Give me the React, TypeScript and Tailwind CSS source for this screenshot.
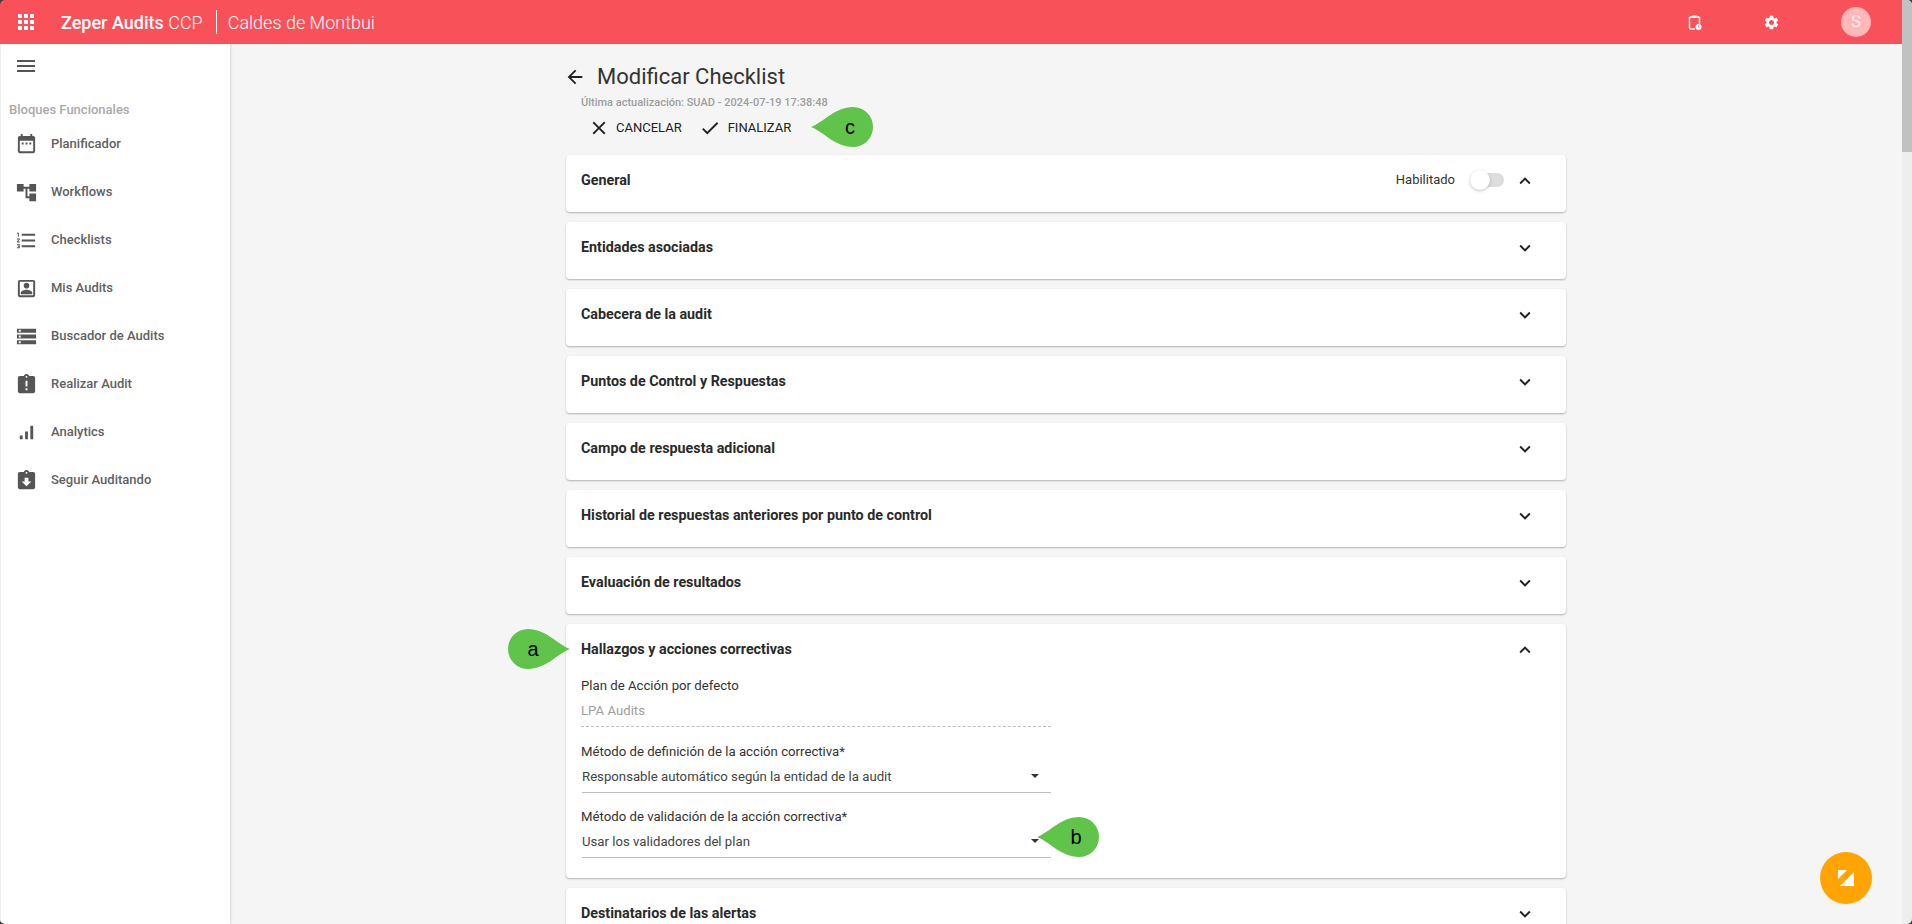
import type { ReactNode } from 'react'

const ROBOTO = 'font-[Roboto,sans-serif]'

function Icon({ d, className = '' }: { d: string; className?: string }) {
  return (
    <svg viewBox="0 0 24 24" fill="currentColor" className={className}>
      <path d={d} />
    </svg>
  )
}

const CHEVRON_DOWN = 'M7.41 8.59 12 13.17l4.59-4.58L18 10l-6 6-6-6z'
const CHEVRON_UP = 'M7.41 15.41 12 10.83l4.59 4.58L18 14l-6-6-6 6z'

const menuItems = [
  {
    label: 'Planificador',
    d: 'M19 3h-1V1h-2v2H8V1H6v2H5c-1.11 0-2 .9-2 2v14c0 1.1.89 2 2 2h14c1.1 0 2-.9 2-2V5c0-1.1-.9-2-2-2zm0 16H5V8h14v11zM7 10h2v2H7zm4 0h2v2h-2zm4 0h2v2h-2z',
  },
  { label: 'Workflows', d: 'M22 11V3h-7v3H9V3H2v8h7V8h2v10h4v3h7v-8h-7v3h-2V8h2v3z' },
  {
    label: 'Checklists',
    d: 'M2 17h2v.5H3v1h1v.5H2v1h3v-4H2v1zm1-9h1V4H2v1h1v3zm-1 3h1.8L2 13.1v.9h3v-1H3.2L5 10.9V10H2v1zm5-6v2h14V5H7zm0 14h14v-2H7v2zm0-6h14v-2H7v2z',
  },
  {
    label: 'Mis Audits',
    d: 'M19 5v14H5V5h14m0-2H5c-1.1 0-2 .9-2 2v14c0 1.1.9 2 2 2h14c1.1 0 2-.9 2-2V5c0-1.1-.9-2-2-2zM12 12c1.65 0 3-1.35 3-3s-1.35-3-3-3-3 1.35-3 3 1.35 3 3 3zm-6 6h12v-1.5c0-2-4-3.1-6-3.1s-6 1.1-6 3.1V18z',
  },
  {
    label: 'Buscador de Audits',
    d: 'M2 20h20v-4H2v4zm2-3h2v2H4v-2zM2 4v4h20V4H2zm4 3H4V5h2v2zm-4 7h20v-4H2v4zm2-3h2v2H4v-2z',
  },
  {
    label: 'Realizar Audit',
    d: 'M19 3h-4.18C14.4 1.84 13.3 1 12 1c-1.3 0-2.4.84-2.82 2H5c-1.1 0-2 .9-2 2v14c0 1.1.9 2 2 2h14c1.1 0 2-.9 2-2V5c0-1.1-.9-2-2-2zm-6 15h-2v-2h2v2zm0-4h-2V8h2v6zm-1-9c-.55 0-1-.45-1-1s.45-1 1-1 1 .45 1 1-.45 1-1 1z',
  },
  { label: 'Analytics', d: 'M5 15h3v4H5zM10.5 11h3v8h-3zM16 5h3v14h-3z' },
  {
    label: 'Seguir Auditando',
    d: 'M19 3h-4.18C14.4 1.84 13.3 1 12 1c-1.3 0-2.4.84-2.82 2H5c-1.1 0-2 .9-2 2v14c0 1.1.9 2 2 2h14c1.1 0 2-.9 2-2V5c0-1.1-.9-2-2-2zm-7 0c.55 0 1 .45 1 1s-.45 1-1 1-1-.45-1-1 .45-1 1-1zm0 15l-5-5h3V9h4v4h3l-5 5z',
  },
]

const collapsed = [
  'Entidades asociadas',
  'Cabecera de la audit',
  'Puntos de Control y Respuestas',
  'Campo de respuesta adicional',
  'Historial de respuestas anteriores por punto de control',
  'Evaluación de resultados',
]

// green marker, tip on the left unless flipped
function Callout({ letter, flip, className }: { letter: string; flip?: boolean; className: string }) {
  return (
    <div className={`absolute w-[62px] h-10 flex items-center justify-center ${className}`}>
      <svg viewBox="0 0 62 40" className={`absolute inset-0 w-[62px] h-10 ${flip ? '-scale-x-100' : ''}`}>
        <path d="M0 20C13 15 24 0 42 0a20 20 0 0 1 0 40C24 40 13 25 0 20z" fill="#60c44a" />
      </svg>
      <span
        className={`relative font-['Liberation_Sans',sans-serif] text-xl text-black ${flip ? 'pr-[12px]' : 'pl-[16px]'}`}
      >
        {letter}
      </span>
    </div>
  )
}

function Card({ title, right, open, children }: { title: string; right?: ReactNode; open?: boolean; children?: ReactNode }) {
  return (
    <div className="relative bg-white rounded-[4px] shadow-[0_1px_2px_rgba(0,0,0,0.28)] shrink-0">
      <div className="h-[57px] pl-[15px] pr-[30px] pt-[14px] flex items-start">
        <div className="text-[14.3px] font-bold leading-[22px] text-[#2a2a2a] flex-1">{title}</div>
        {right}
        <Icon d={open ? CHEVRON_UP : CHEVRON_DOWN} className="w-[22px] h-[22px] mt-[1px] text-[#212121]" />
      </div>
      {children}
    </div>
  )
}

function SelectField({ label, value, children }: { label: string; value: string; children?: ReactNode }) {
  return (
    <div className="relative w-[470px] ml-[15px] h-[65px]">
      <div className="text-[13.2px] leading-4 text-[#333]">{label}</div>
      <div className="mt-[9px] ml-[1px] h-[24px] border-b border-[#bdbdbd] flex text-[13.2px] leading-4 text-[#444]">
        <span className="flex-1">{value}</span>
        <span className="mt-[5px] mr-[12px] w-0 h-0 border-x-4 border-x-transparent border-t-4 border-t-[#333]" />
      </div>
      {children}
    </div>
  )
}

export default function App() {
  return (
    <div className="h-screen w-full bg-[#3a3a3a] overflow-hidden">
      <div className={`relative h-full flex rounded-[5px] overflow-hidden ${ROBOTO}`}>
        <div className="flex-1 min-w-0 flex flex-col">
          <header className="h-11 shrink-0 bg-[#f8515a] text-white flex items-center relative z-10">
            <Icon
              d="M4 8h4V4H4v4zm6 12h4v-4h-4v4zm-6 0h4v-4H4v4zm0-6h4v-4H4v4zm6 0h4v-4h-4v4zm6-10v4h4V4h-4zm-6 4h4V4h-4v4zm6 6h4v-4h-4v4zm0 6h4v-4h-4v4z"
              className="w-6 h-6 ml-[14px]"
            />
            <div className="ml-[23px] text-[18px] font-medium">
              Zeper Audits <span className="font-light">CCP</span>
            </div>
            <div className="w-px h-6 bg-white ml-[13px]" />
            <div className="ml-[11px] text-[18px] font-light">Caldes de Montbui</div>
            <div className="flex-1" />
            <svg viewBox="0 0 14 15" className="w-[14px] h-[15px] mr-[61px]" fill="none" stroke="white">
              <path d="M4 2H2.500A1 1 0 0 0 1.500 3v10a1 1 0 0 0 1 1H7M9 2h1.500a1 1 0 0 1 1 1v6" strokeWidth="1.4" />
              <rect x="4" y="0.500" width="5" height="2.500" rx="0.800" fill="white" stroke="none" />
              <circle cx="10.500" cy="12" r="3" fill="white" stroke="none" />
              <path d="M10.500 10.500V12l1 .7" stroke="#f8515a" strokeWidth="0.700" />
            </svg>
            <Icon
              d="M19.14 12.94c.04-.3.06-.61.06-.94 0-.32-.02-.64-.07-.94l2.03-1.58c.18-.14.23-.41.12-.61l-1.92-3.32c-.12-.22-.37-.29-.59-.22l-2.39.96c-.5-.38-1.03-.7-1.62-.94l-.36-2.54c-.04-.24-.24-.41-.48-.41h-3.84c-.24 0-.43.17-.47.41l-.36 2.54c-.59.24-1.13.57-1.62.94l-2.39-.96c-.22-.08-.47 0-.59.22L2.74 8.87c-.12.21-.08.47.12.61l2.03 1.58c-.05.3-.09.63-.09.94s.02.64.07.94l-2.03 1.58c-.18.14-.23.41-.12.61l1.92 3.32c.12.22.37.29.59.22l2.39-.96c.5.38 1.03.7 1.62.94l.36 2.54c.05.24.24.41.48.41h3.84c.24 0 .44-.17.47-.41l.36-2.54c.59-.24 1.13-.56 1.62-.94l2.39.96c.22.08.47 0 .59-.22l1.92-3.32c.12-.22.07-.47-.12-.61l-2.01-1.58zM12 15.6c-1.98 0-3.6-1.62-3.6-3.6s1.62-3.6 3.6-3.6 3.6 1.62 3.6 3.6-1.62 3.6-3.6 3.6z"
              className="w-[17px] h-[17px] mr-[61px]"
            />
            <div className="w-[30px] h-[30px] rounded-full bg-[#ffb8b8] mr-[31px] flex items-center justify-center text-base font-light">
              S
            </div>
          </header>

          <div className="flex-1 min-h-0 flex">
            <aside className="w-[230px] shrink-0 bg-white shadow-[1px_0_2px_rgba(0,0,0,0.12)] z-[1] border-l border-[#eeeeee]">
              <Icon d="M3 18h18v-2H3v2zm0-5h18v-2H3v2zm0-7v2h18V6H3z" className="w-6 h-6 ml-[13px] mt-[10px] text-[#555]" />
              <div className="mt-[24px] ml-[8px] text-[13px] leading-4 text-[#aaaaaa] font-medium">Bloques Funcionales</div>
              <nav className="mt-[2px]">
                {menuItems.map((item) => (
                  <div key={item.label} className="h-12 flex items-center">
                    <Icon d={item.d} className="w-[23px] h-[23px] ml-[14px] text-[#555]" />
                    <span className="ml-[13px] text-[13px] font-medium text-[#616161]">{item.label}</span>
                  </div>
                ))}
              </nav>
            </aside>

            <main className="flex-1 min-w-0 bg-[#f5f5f5] overflow-hidden">
              <div className="w-[1000px] mx-auto">
                <div className="h-[111px] relative">
                  <div className="flex items-center pt-[19px]">
                    <Icon d="M20 11H7.83l5.59-5.59L12 4l-8 8 8 8 1.41-1.41L7.83 13H20v-2z" className="w-[22px] h-[22px] text-[#222] -ml-[2px]" />
                    <h1 className="ml-[11px] text-[22px] leading-7 text-[#333]">Modificar Checklist</h1>
                  </div>
                  <div className="ml-[15px] mt-[5px] text-[11px] leading-[14px] text-[#9e9e9e] font-medium">
                    Última actualización: SUAD - 2024-07-19 17:38:48
                  </div>
                  <div className="relative w-[310px] flex items-center mt-[7px] ml-[22px] text-[13px] text-[#222]">
                    <Icon
                      d="M19 6.41 17.59 5 12 10.59 6.41 5 5 6.41 10.59 12 5 17.59 6.41 19 12 13.41 17.59 19 19 17.59 13.41 12z"
                      className="w-[22px] h-[22px]"
                    />
                    <span className="ml-[6px]">CANCELAR</span>
                    <Icon d="M9 16.17 4.83 12l-1.42 1.41L9 19 21 7l-1.41-1.41z" className="w-[22px] h-[22px] ml-[17px]" />
                    <span className="ml-[7px]">FINALIZAR</span>
                    <Callout letter="c" className="left-[223px] -top-[10px]" />
                  </div>
                </div>

                <div className="flex flex-col gap-[10px]">
                  <Card
                    title="General"
                    open
                    right={
                      <>
                        <span className="text-[13px] leading-[22px] text-[#333] mr-[15px]">Habilitado</span>
                        <div className="relative w-[34px] h-[14px] mt-[4px] mr-[10px] rounded-full bg-[#dddddd]">
                          <div className="absolute left-0 -top-[3px] w-5 h-5 rounded-full bg-white shadow-[0_1px_3px_rgba(0,0,0,0.25)]" />
                        </div>
                      </>
                    }
                  />
                  {collapsed.map((t) => (
                    <Card key={t} title={t} />
                  ))}
                  <Card title="Hallazgos y acciones correctivas" open>
                    <Callout letter="a" flip className="-left-[58px] top-[5px]" />
                    <div className="relative -mt-[3px] h-[200px]">
                      <div className="w-[470px] ml-[15px] h-[66px]">
                        <div className="text-[13.2px] leading-4 text-[#333]">Plan de Acción por defecto</div>
                        <div className="mt-[9px] h-[24px] border-b border-dashed border-[#bdbdbd] text-[13.2px] leading-4 text-[#9e9e9e]">
                          LPA Audits
                        </div>
                      </div>
                      <SelectField label="Método de definición de la acción correctiva*" value="Responsable automático según la entidad de la audit" />
                      <SelectField label="Método de validación de la acción correctiva*" value="Usar los validadores del plan">
                        <Callout letter="b" className="left-[456px] top-[8px]" />
                      </SelectField>
                    </div>
                  </Card>
                  <Card title="Destinatarios de las alertas" />
                </div>
              </div>
            </main>
          </div>
        </div>

        <div className="w-[10px] shrink-0 bg-[#eeeeee]">
          <div className="h-[152px] bg-[#c1c1c1]" />
        </div>

        <div className="absolute left-[1820px] top-[852px] w-[52px] h-[52px] rounded-full bg-[#ffa400] flex items-center justify-center">
          <svg viewBox="0 0 16 16" className="w-4 h-4" fill="white">
            <path d="M0 0h9L0 9zM16 2v14H2z" />
          </svg>
        </div>
      </div>
    </div>
  )
}
